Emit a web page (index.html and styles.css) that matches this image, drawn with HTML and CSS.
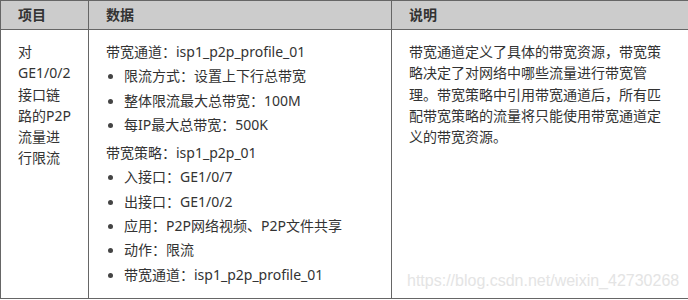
FILE: index.html
```html
<!DOCTYPE html>
<html lang="zh-CN">
<head>
    <meta charset="UTF-8">
    <meta name="viewport" content="width=device-width, initial-scale=1.0">
    <title>P2P流量限流配置</title>
    <link rel="stylesheet" href="styles.css">
</head>
<body>

    <div class="page">
        <!-- 配置说明表 -->
        <table class="config-table">
            <colgroup>
                <col class="col-item">
                <col class="col-data">
                <col class="col-desc">
            </colgroup>
            <thead>
                <tr>
                    <th>项目</th>
                    <th>数据</th>
                    <th>说明</th>
                </tr>
            </thead>
            <tbody>
                <tr>
                    <td class="cell-item">对GE1/0/2接口链路的P2P流量进行限流</td>
                    <td class="cell-data">
                        <p>带宽通道：isp1_p2p_profile_01</p>
                        <ul>
                            <li>限流方式：设置上下行总带宽</li>
                            <li>整体限流最大总带宽：100M</li>
                            <li>每IP最大总带宽：500K</li>
                        </ul>
                        <p>带宽策略：isp1_p2p_01</p>
                        <ul>
                            <li>入接口：GE1/0/7</li>
                            <li>出接口：GE1/0/2</li>
                            <li>应用：P2P网络视频、P2P文件共享</li>
                            <li>动作：限流</li>
                            <li>带宽通道：isp1_p2p_profile_01</li>
                        </ul>
                    </td>
                    <td class="cell-desc">带宽通道定义了具体的带宽资源，带宽策略决定了对网络中哪些流量进行带宽管理。带宽策略中引用带宽通道后，所有匹配带宽策略的流量将只能使用带宽通道定义的带宽资源。</td>
                </tr>
            </tbody>
        </table>

        <span class="watermark">https://blog.csdn.net/weixin_42730268</span>
    </div>

</body>
</html>
```

FILE: styles.css
```css
html, body {
    margin: 0;
    padding: 0;
    overflow: hidden;
    background-color: #fff;
}

body {
    font-family: "Noto Sans", "Noto Sans CJK SC", sans-serif;
    font-size: 14px;
    color: #333;
}

.page {
    position: relative;
    width: 688px;
    height: 300px;
}

.config-table {
    border-collapse: collapse;
    table-layout: fixed;
    width: 710px;
}

.col-item {
    width: 88px;
}

.col-data {
    width: 303px;
}

.col-desc {
    width: 319px;
}

.config-table th,
.config-table td {
    border: 1px solid #666;
    text-align: left;
    vertical-align: top;
}

.config-table th {
    background-color: #ccc;
    font-weight: bold;
    line-height: 20px;
    padding: 4px 17px;
}

.config-table td {
    line-height: 21.3px;
    padding: 11px 17px 13px 17px;
}

.cell-desc {
    padding-right: 42px !important;
}

.cell-data p {
    margin: 0;
}

.cell-data ul {
    list-style: none;
    margin: 1px 0 7px 0;
    padding: 0;
}

.cell-data ul:last-child {
    margin-bottom: 0;
}

.cell-data li {
    position: relative;
    margin-top: 3px;
    padding-left: 18px;
}

.cell-data li::before {
    content: "";
    position: absolute;
    left: 2px;
    top: 9px;
    width: 5px;
    height: 5px;
    border-radius: 50%;
    background-color: #444;
}

.watermark {
    position: absolute;
    left: 407px;
    top: 272px;
    font-family: "Liberation Sans", Arial, sans-serif;
    font-size: 16px;
    color: #e4e4e4;
    white-space: nowrap;
}
```
